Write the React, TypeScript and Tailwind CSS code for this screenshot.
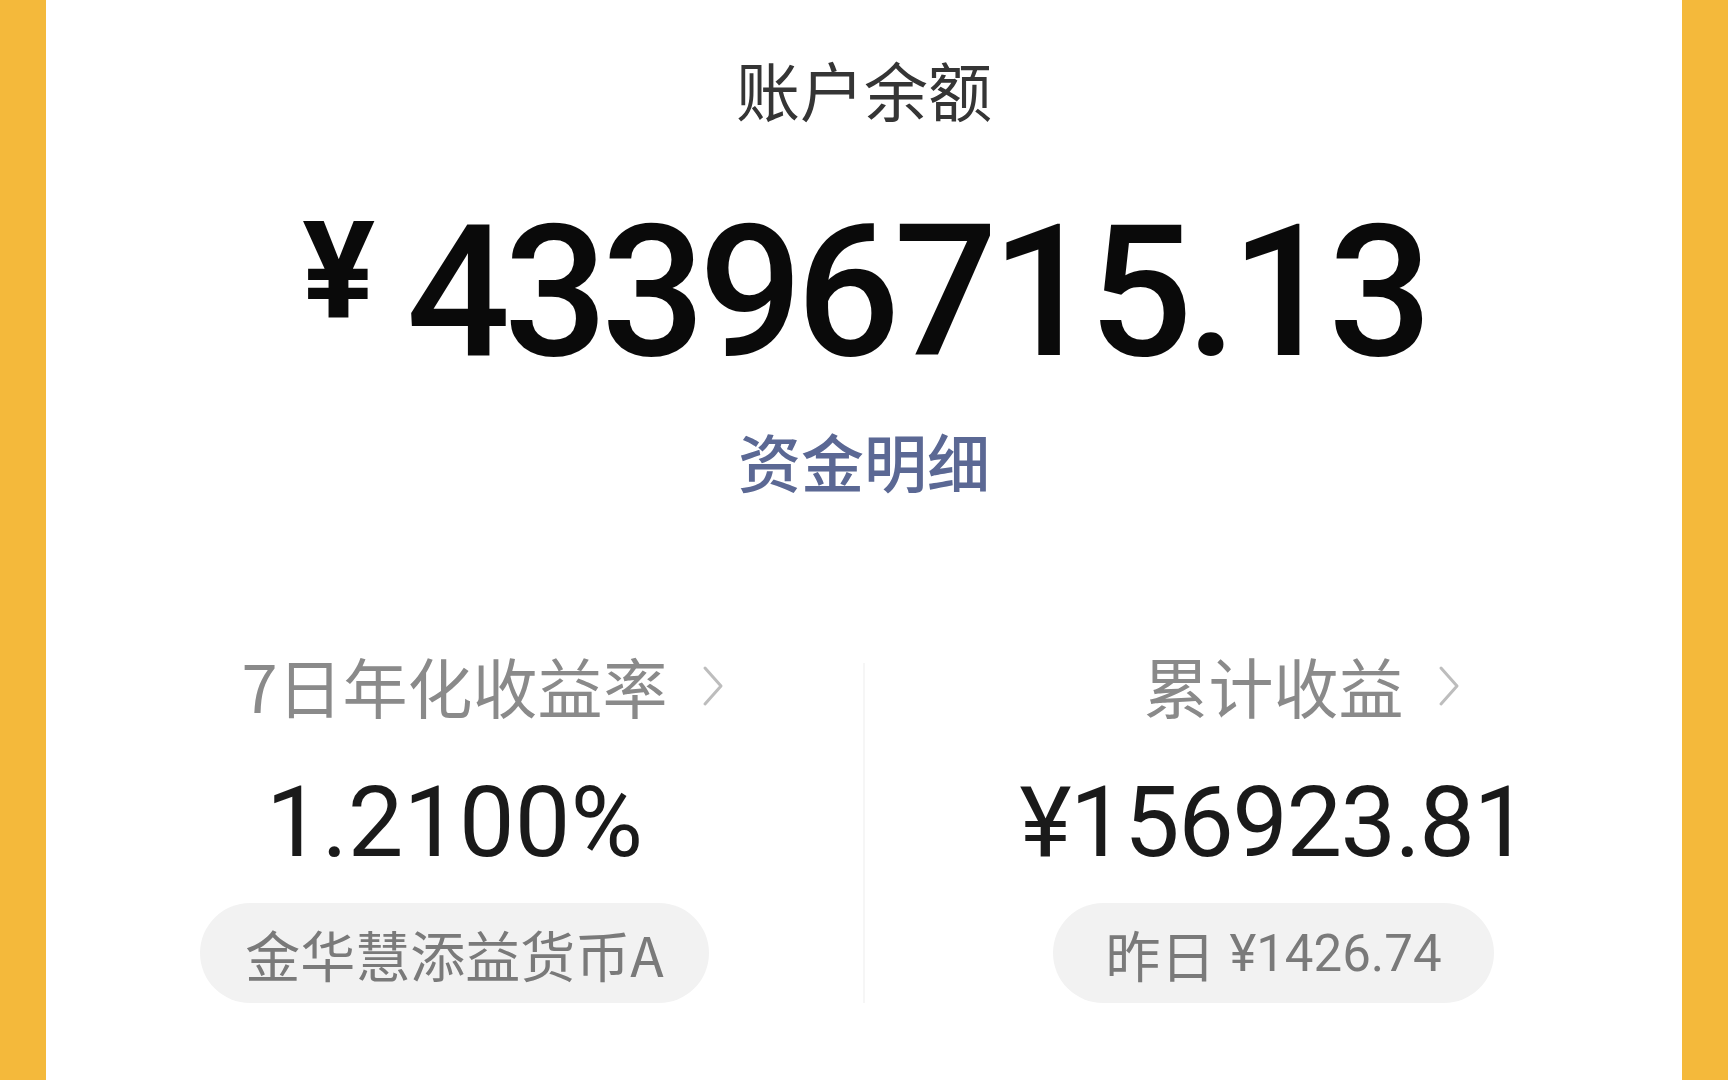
import React from "react";

function Chevron() {
  return (
    <svg width="22" height="44" viewBox="0 0 22 44" className="absolute left-full top-1/2 -translate-y-1/2 ml-[34px]">
      <polyline points="3,4 19,22 3,40" fill="none" stroke="#bdbdbd" strokeWidth="3" strokeLinecap="round" strokeLinejoin="round" />
    </svg>
  );
}

function Stat({ title, value, valueClass, children }: { title: string; value: string; valueClass: string; children: React.ReactNode }) {
  return (
    <div className="flex-1 flex flex-col items-center">
      <div className="relative text-[65px] leading-[65px] text-[#8a8a8a] font-['Noto_Sans_CJK_SC',sans-serif]">
        <span>{title}</span>
        <Chevron />
      </div>
      <div className={"mt-[55px] text-[99px] leading-[99px] text-[#1a1a1a] font-['Roboto',sans-serif] " + valueClass}>
        {value}
      </div>
      {children}
    </div>
  );
}

export default function App() {
  return (
    <div className="w-full h-[1080px] bg-[#f4b93b] flex px-[46px] overflow-hidden">
      <div className="flex-1 bg-white flex flex-col items-center">
        <div className="mt-[56px] text-[64px] leading-[64px] text-[#353535] font-['Noto_Sans_CJK_SC',sans-serif]">
          账户余额
        </div>

        <div className="mt-[81px] flex items-start text-[#0a0a0a] font-['Roboto',sans-serif]">
          <span className="text-[136px] leading-[136px] font-bold mt-[3px] mr-[31px]">¥</span>
          <span className="text-[183px] leading-[183px] font-medium tracking-[-6.5px]">43396715.13</span>
        </div>

        <div className="mt-[44px] text-[63px] leading-[63px] font-medium text-[#5b6894] font-['Noto_Sans_CJK_SC',sans-serif]">
          资金明细
        </div>

        <div className="mt-[162px] w-full flex">
          <Stat title="7日年化收益率" value="1.2100%" valueClass="">
            <div className="mt-[31px] h-[100px] px-[45px] rounded-full bg-[#f2f2f2] flex items-center text-[55px] leading-[55px] text-[#7a7a7a] font-['Noto_Sans_CJK_SC',sans-serif]">
              金华慧添益货币A
            </div>
          </Stat>

          <div className="w-[2px] mt-[10px] h-[340px] bg-[#f6f6f6]" />

          <Stat title="累计收益" value="¥156923.81" valueClass="tracking-[-1.5px]">
            <div className="mt-[31px] h-[100px] px-[52px] rounded-full bg-[#f2f2f2] flex items-center text-[55px] leading-[55px] text-[#7a7a7a] font-['Noto_Sans_CJK_SC',sans-serif]">
              <span>昨日</span>
              <span className="ml-[14px] text-[51px] font-['Roboto',sans-serif]">¥1426.74</span>
            </div>
          </Stat>
        </div>
      </div>
    </div>
  );
}
